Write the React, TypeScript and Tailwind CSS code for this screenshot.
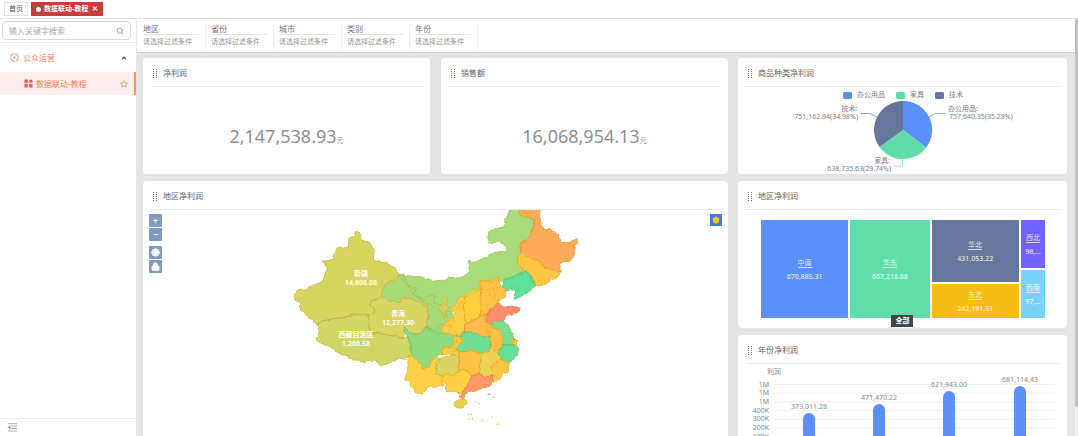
import { ChevronUp, Globe, Lock, Search, Star } from "lucide-react";
import type { ReactNode } from "react";

const filters = ["地区", "省份", "城市", "类别", "年份"];

const provinces = [
  // north
  { name: "内蒙古", color: "#a8db7a", points: "357,225 400,229 425,232 455,240 472,245 510,233 550,230 572,212 565,186 575,182 585,188 615,172 640,158 682,152 674,136 658,125 628,129 622,115 636,88 672,82 676,60 692,28 726,28 750,52 765,60 755,92 745,115 724,132 725,155 712,167 718,195 732,202 730,218 685,236 672,245 655,240 620,245 605,268 555,292 530,325 500,350 465,325 430,302 400,280 375,250" },
  { name: "黑龙江", color: "#ffab58", points: "720,27 775,27 782,60 792,88 815,90 835,105 836,126 860,128 890,113 892,118 875,180 855,182 840,190 840,215 795,206 780,184 750,174 722,156 720,132 745,115 765,60 750,52 722,46" },
  { name: "吉林", color: "#ffc544", points: "712,167 725,158 750,175 778,184 795,207 838,214 838,226 820,236 795,250 766,260 752,230 740,216 730,218 732,202 715,192" },
  { name: "辽宁", color: "#5ee09b", points: "672,238 700,228 740,215 755,228 765,258 725,288 700,299 710,268 690,266 675,276 670,262" },
  // west
  { name: "甘肃", color: "#a9da78", points: "357,224 372,226 380,250 388,266 410,262 403,280 432,299 440,290 464,288 462,308 480,318 500,330 515,338 524,350 526,366 510,378 505,395 480,402 450,390 438,378 446,345 440,318 400,298 372,293 355,308 330,304 304,292 308,268 326,246" },
  { name: "新疆", color: "#d7d45e", points: "42,288 52,274 68,268 80,268 90,260 108,254 130,240 138,215 138,190 130,184 160,178 172,140 205,144 207,116 224,110 228,98 238,99 242,112 258,124 272,128 282,148 280,180 318,186 340,200 357,224 348,236 326,246 308,268 304,292 275,304 268,315 285,328 282,338 262,342 240,342 215,347 205,352 165,355 130,362 113,375 100,360 78,350 72,338 58,325 60,310 48,302" },
  { name: "青海", color: "#dad461", points: "304,292 330,304 355,308 372,293 400,298 420,305 440,318 446,340 440,368 450,388 430,383 420,400 400,402 378,382 370,418 345,410 320,404 275,398 266,385 268,360 262,342 285,336 285,328 268,315 275,304" },
  { name: "西藏", color: "#d0d766", points: "113,375 130,362 165,355 205,352 215,345 262,342 268,360 266,385 275,398 320,404 345,410 370,418 385,410 393,440 395,468 375,478 360,474 345,482 320,492 300,496 285,480 262,482 256,490 250,482 225,480 195,465 165,450 150,440 130,432 112,425 110,410 118,402" },
  { name: "四川", color: "#8fdc80", points: "372,384 380,384 400,402 420,402 430,388 440,378 465,390 485,372 510,376 530,400 530,425 510,442 487,447 487,462 460,472 452,484 448,502 432,508 420,490 405,472 395,468 393,440 385,415 375,402" },
  { name: "宁夏", color: "#d8d260", points: "490,290 502,292 498,314 510,322 498,336 492,358 485,335 474,322 488,314" },
  { name: "云南", color: "#ffd044", points: "380,465 395,475 405,470 420,490 432,508 448,502 452,482 460,470 482,480 470,490 470,510 480,528 495,532 485,545 492,558 465,562 440,560 430,582 410,578 395,562 390,545 373,538 385,515 388,490" },
  // center
  { name: "陕西", color: "#ffd044", points: "510,320 525,318 535,295 555,288 552,330 555,360 553,397 550,410 520,405 488,395 492,370 512,365 525,350 522,335" },
  { name: "山西", color: "#ffd13f", points: "555,288 580,270 602,268 600,300 605,330 598,350 555,368 552,330" },
  { name: "河北", color: "#ffc145", points: "602,268 600,242 620,243 655,230 662,250 672,264 680,288 662,295 653,310 635,320 622,345 598,349 605,325 602,290" },
  { name: "北京", color: "#ffc83e", points: "625,270 638,262 648,275 642,290 628,283" },
  { name: "天津", color: "#ffd044", points: "645,283 653,288 656,302 647,300" },
  { name: "山东", color: "#ff8c6c", points: "620,345 630,327 655,311 675,325 695,315 720,322 718,333 695,345 675,350 665,368 640,365 630,373 616,367" },
  { name: "河南", color: "#ffb94e", points: "556,367 598,349 620,345 618,366 636,372 624,390 632,413 610,411 575,397 553,395" },
  { name: "江苏", color: "#7adf91", points: "635,370 665,365 685,375 695,400 708,420 690,432 665,432 666,410 655,390 640,380" },
  { name: "安徽", color: "#ffc145", points: "620,380 640,378 655,390 666,410 670,432 662,453 640,453 628,440 632,415 622,400" },
  { name: "上海", color: "#ffc431", points: "700,422 712,421 711,436 698,433" },
  { name: "浙江", color: "#63df99", points: "668,432 695,432 718,444 712,465 695,485 680,488 660,478 658,455" },
  { name: "湖北", color: "#6fdf94", points: "548,397 575,396 600,410 630,413 630,436 628,453 605,460 580,452 540,453 528,446 540,430 550,422 538,412" },
  { name: "重庆", color: "#ffc93f", points: "525,408 540,410 550,422 532,435 530,448 541,458 538,476 520,464 510,462 485,465 485,447 510,442 520,428" },
  { name: "贵州", color: "#dad461", points: "480,475 505,470 520,462 538,475 538,515 520,523 490,528 468,522 470,500 465,487" },
  { name: "湖南", color: "#ffc145", points: "540,452 580,450 606,459 602,490 600,522 572,528 565,512 538,512 538,475" },
  { name: "江西", color: "#eed252", points: "606,459 630,450 660,452 658,476 638,497 634,530 610,530 599,517 602,487" },
  { name: "福建", color: "#ffc544", points: "658,477 688,490 685,510 665,530 642,550 634,530 638,498" },
  { name: "广西", color: "#ffd044", points: "488,528 520,523 540,511 565,511 572,532 562,558 545,578 525,578 500,572 500,555 484,540" },
  { name: "广东", color: "#ff9868", points: "573,525 600,519 610,530 638,528 643,542 630,555 600,565 568,575 553,585 553,596 542,594 545,575 562,558 568,540" },
  { name: "海南", color: "#e8cf4f", points: "535,600 556,598 558,608 545,625 528,623 526,612" },
];

const islets = [
  { x: 566, y: 643 }, { x: 574, y: 644 }, { x: 569, y: 650 }, { x: 577, y: 653 }, { x: 567, y: 658 },
  { x: 600, y: 662 }, { x: 606, y: 658 }, { x: 608, y: 666 }, { x: 636, y: 652 }, { x: 652, y: 670 },
  { x: 586, y: 607 }, { x: 597, y: 611 },
];

const mapLabels = [
  { name: "新疆", value: "14,606.06", x: 361, y: 276 },
  { name: "青海", value: "12,277.30", x: 398, y: 316 },
  { name: "西藏自治区", value: "1,266.58", x: 356, y: 337 },
];

const legend = [
  { name: "办公用品", color: "#5b8ff9", x: 843 },
  { name: "家具", color: "#5fdca9", x: 896 },
  { name: "技术", color: "#65779b", x: 935 },
];

const ticks = ["1M", "1M", "1M", "400K", "300K", "200K", "100K"];

const bars = [
  { value: "373,011.28", x: 809, top: 413 },
  { value: "471,470.22", x: 879, top: 404 },
  { value: "621,943.00", x: 949, top: 391 },
  { value: "681,114.43", x: 1020, top: 386 },
];

const DragHandle = () => (
  <svg viewBox="0 0 4 9" className="h-[9px] w-1 shrink-0 fill-[#777]">
    {[0, 2, 4, 6, 8].map((y) => (
      <g key={y}>
        <rect x="0" y={y} width="1" height="1" />
        <rect x="3" y={y} width="1" height="1" />
      </g>
    ))}
  </svg>
);

const Card = ({ title, children, className = "" }: { title: string; children: ReactNode; className?: string }) => (
  <section className={`flex flex-col rounded-sm bg-white ${className}`}>
    <header className="mx-2 flex h-[29px] shrink-0 items-center gap-1.5 border-b border-[#e8e8e8] px-[2px] pt-[2px]">
      <DragHandle />
      <h2 className="text-[8px] leading-3 text-[#666]">{title}</h2>
    </header>
    {children}
  </section>
);

const Metric = ({ value }: { value: string }) => (
  <div className="flex flex-1 items-center justify-center pt-4 text-[#8f8f8f]">
    <p className="text-[18px] leading-6">
      {value}
      <span className="text-[7px]">元</span>
    </p>
  </div>
);

const TreeCell = ({ name, value, className }: { name: string; value: string; className: string }) => (
  <div className={`flex min-w-0 flex-col items-center justify-center gap-1 overflow-hidden text-[7px] leading-[9px] text-white/80 ${className}`}>
    <span className="border-b border-white/70">{name}</span>
    <span className="font-medium">{value}</span>
  </div>
);

const Sidebar = () => (
  <aside className="flex w-[137px] shrink-0 flex-col border-r border-[#e6e6e6] bg-white">
    <div className="border-b border-[#ececec] py-[2px] pr-[5px] pl-[2px]">
      <label className="flex h-[19px] items-center rounded-sm border border-[#d9d9d9] px-1.5">
        <input
          aria-label="搜索"
          placeholder="输入关键字搜索"
          className="w-full min-w-0 text-[8px] leading-3 outline-none placeholder:text-[#aaa]"
        />
        <Search className="size-2 shrink-0 text-[#777]" />
      </label>
    </div>
    <nav className="flex flex-1 flex-col text-[8px] leading-3 text-[#f57c5a]">
      <button className="flex h-[29px] items-center gap-1 pr-[9px] pl-[10px]">
        <svg viewBox="0 0 9 9" className="size-[9px]" fill="none" stroke="currentColor">
          <circle cx="4.5" cy="4.5" r="3.9" strokeWidth="1" strokeDasharray="5 1.1" />
          <circle cx="4.5" cy="4.5" r="1.1" fill="currentColor" stroke="none" />
        </svg>
        <span>公众运营</span>
        <ChevronUp className="ml-auto size-[6px] text-[#555]" strokeWidth={5} />
      </button>
      <a href="#tutorial" className="flex h-[23px] items-center gap-[3px] border-r-2 border-[#ff8f6b] bg-[#fdefed] pr-[6px] pl-6">
        <svg viewBox="0 0 9 9" className="size-[9px]" fill="#f25a4a">
          <rect x="0.4" y="0.5" width="3.5" height="3.5" rx="0.5" />
          <rect x="5" y="0.5" width="3.5" height="3.5" rx="1.7" />
          <rect x="0.4" y="5" width="3.5" height="3.5" rx="0.5" />
          <rect x="5" y="5" width="3.5" height="3.5" rx="0.5" />
        </svg>
        <span>数据联动-教程</span>
        <Star className="ml-auto size-2 text-[#c98748]" />
      </a>
    </nav>
    <div className="flex h-[18px] items-center border-t border-[#ececec] pl-2">
      <button aria-label="收起菜单">
        <svg viewBox="0 0 9 9" className="size-[9px]">
          <path d="M0 0.7H9M3 3.1H9M3 5.5H9M0 8H9" stroke="#a9a29c" strokeWidth="0.9" />
          <path d="M2.3 2.4V6.2L0 4.3Z" fill="#e8603c" />
        </svg>
      </button>
    </div>
  </aside>
);

const RegionMap = () => (
  <div className="relative overflow-hidden">
    <svg viewBox="143 210 585 250" className="block w-full">
      <defs>
        <filter id="coast" x="-5%" y="-5%" width="110%" height="110%">
          <feTurbulence type="fractalNoise" baseFrequency="0.045" numOctaves="2" seed="4" />
          <feDisplacementMap in="SourceGraphic" scale="16" xChannelSelector="R" yChannelSelector="G" />
        </filter>
      </defs>
      <g transform="translate(280 200) scale(0.3333)" filter="url(#coast)">
        {provinces.map((p) => (
          <polygon key={p.name} points={p.points} fill={p.color} stroke={p.color} strokeWidth="3" strokeLinejoin="round" />
        ))}
        {provinces.map((p) => (
          <polygon key={p.name} points={p.points} fill="none" stroke="#a07800" strokeOpacity="0.25" strokeWidth="2.5" strokeLinejoin="round" />
        ))}
        {islets.map((i) => (
          <circle key={`${i.x}-${i.y}`} cx={i.x} cy={i.y} r="2.5" fill="#d2c45c" />
        ))}
        <circle cx="628" cy="586" r="2.5" fill="#ff7d60" />
        <circle cx="641" cy="590" r="2.5" fill="#ff7d60" />
      </g>
      {mapLabels.map((l) => (
        <text key={l.name} x={l.x} y={l.y} textAnchor="middle" className="fill-white text-[7px] font-semibold">
          {l.name}
          <tspan x={l.x} dy="9">{l.value}</tspan>
        </text>
      ))}
    </svg>
    <div className="absolute top-1 left-1.5 flex flex-col gap-px text-white">
      <button aria-label="放大" className="flex size-[13px] items-center justify-center rounded-[1px] bg-[#7b9bc4] text-[9px] leading-none font-bold">+</button>
      <button aria-label="缩小" className="flex size-[13px] items-center justify-center rounded-[1px] bg-[#7b9bc4] text-[9px] leading-none font-bold">−</button>
      <button aria-label="全图" className="mt-1 flex size-[13px] items-center justify-center rounded-[1px] bg-[#7b9bc4]">
        <Globe className="size-[9px] fill-white/70" />
      </button>
      <button aria-label="锁定" className="flex size-[13px] items-center justify-center rounded-[1px] bg-[#7b9bc4]">
        <Lock className="size-[9px] fill-white" strokeWidth={3} />
      </button>
    </div>
    <button aria-label="图层" className="absolute top-1 right-1.5 flex size-[12px] items-center justify-center bg-[#3c7edb]">
      <svg viewBox="0 0 8 8" className="size-2">
        <path d="M4 0.3L7.5 2.6L6.6 6.8L4 7.7L1.2 6.6L0.5 2.6Z" fill="#f5c02c" />
      </svg>
    </button>
  </div>
);

const CategoryPie = () => (
  <svg viewBox="738 87 329 87" className="block w-full fill-[#808080] text-[7px]">
    {legend.map((l) => (
      <g key={l.name}>
        <rect x={l.x} y="92" width="9" height="7" rx="1.5" fill={l.color} />
        <text x={l.x + 14} y="97">{l.name}</text>
      </g>
    ))}
    <path d="M903 130V101A29 29 0 0 1 926.2 147.5Z" fill="#5b8ff9" />
    <path d="M903 130L926.2 147.5A29 29 0 0 1 879.5 147Z" fill="#5fdca9" />
    <path d="M903 130L879.5 147A29 29 0 0 1 903 101Z" fill="#65779b" />
    <path d="M929 117L935 113.5H945" fill="none" stroke="#5b8ff9" strokeWidth="0.7" />
    <path d="M877 117L870 113.5H861" fill="none" stroke="#65779b" strokeWidth="0.7" />
    <path d="M902.5 159V166H894" fill="none" stroke="#5fdca9" strokeWidth="0.7" />
    <text x="948" y="111">办公用品:</text>
    <text x="949" y="119">757,640.35(35.28%)</text>
    <text x="857" y="111" textAnchor="end">技术:</text>
    <text x="858" y="119" textAnchor="end">751,162.94(34.98%)</text>
    <text x="890" y="163" textAnchor="end">家具:</text>
    <text x="891" y="171" textAnchor="end">638,735.63(29.74%)</text>
  </svg>
);

const RegionTreemap = () => (
  <div className="relative pt-[10px] pr-[22px] pb-[10px] pl-[23px]">
    <div className="grid h-[98px] grid-cols-[87fr_79fr_87fr_24fr] gap-[2px]">
      <TreeCell name="中南" value="670,885.31" className="bg-[#5b8ff9]" />
      <TreeCell name="华东" value="607,218.68" className="bg-[#61ddaa]" />
      <div className="grid grid-rows-[62fr_34fr] gap-[2px]">
        <TreeCell name="华北" value="431,053.22" className="bg-[#65779b]" />
        <TreeCell name="东北" value="242,191.51" className="bg-[#f6bd16]" />
      </div>
      <div className="grid grid-rows-2 gap-[2px]">
        <TreeCell name="西北" value="98,..." className="bg-[#7262fd]" />
        <TreeCell name="西南" value="97,..." className="bg-[#78d3f8]" />
      </div>
    </div>
    <button className="absolute bottom-px left-1/2 h-3 w-[22px] -translate-x-1/2 bg-[#444] text-[7px] leading-3 font-bold text-white">
      全部
    </button>
  </div>
);

const YearBars = () => (
  <svg viewBox="738 364 329 90" className="block w-full fill-[#8a8a8a] text-[7px]">
    <text x="767" y="374">利润</text>
    {ticks.map((t, i) => (
      <g key={i}>
        <line x1="773" x2="1055" y1={384.5 + i * 8.7} y2={384.5 + i * 8.7} stroke="#f0f0f0" strokeWidth="1" />
        <text x="769" y={386.5 + i * 8.7} textAnchor="end">{t}</text>
      </g>
    ))}
    {bars.map((b) => (
      <g key={b.value}>
        <path d={`M${b.x - 6} 454V${b.top + 6}a6 6 0 0 1 12 0V454Z`} fill="#5b8ff9" />
        <text x={b.x} y={b.top - 4} textAnchor="middle">{b.value}</text>
      </g>
    ))}
  </svg>
);

const App = () => {
  return (
    <div className="flex h-screen flex-col overflow-hidden bg-[#e4e4e4] font-['Noto_Sans','Noto_Sans_CJK_SC',sans-serif]">
      {/* Open pages */}
      <div className="flex h-[19px] shrink-0 items-start gap-[3px] border-b border-[#e2e2e2] bg-white px-1 pt-[2px] text-[7px]">
        <button className="h-[14px] border border-[#e6e6e6] px-1 leading-3 text-[#555]">首页</button>
        <button className="flex h-[14px] items-center gap-[3px] bg-[#c83c3c] px-[5px] font-bold text-white">
          <span className="size-[5px] rounded-full bg-white" />
          数据联动-教程
          <span className="pl-px">✕</span>
        </button>
      </div>

      <div className="flex min-h-0 flex-1">
        <Sidebar />

        <main className="flex min-w-0 flex-1 flex-col overflow-hidden">
          {/* Filters */}
          <div className="z-10 flex h-[33px] shrink-0 bg-white pt-1 pl-[6px] shadow-[0_1px_1px_#d4d4d4]">
            {filters.map((f) => (
              <label key={f} className="mr-[5px] h-[26px] w-[63px] border-r border-[#eee] pr-[6px] text-[8px] leading-[11px] text-[#777]">
                <span className="block border-b border-[#e6e6e6]">{f}</span>
                <input
                  placeholder="请选择过滤条件"
                  className="block w-full pt-px text-[7px] leading-3 outline-none placeholder:text-[#999]"
                />
              </label>
            ))}
          </div>

          {/* Dashboard */}
          <div className="grid grid-cols-[16fr_9fr] items-start gap-[10px] pt-[6px] pr-2 pl-[6px]">
            <div className="flex min-w-0 flex-col gap-[7px]">
              <div className="grid grid-cols-2 gap-[11px]">
                <Card title="净利润" className="h-[116px]">
                  <Metric value="2,147,538.93" />
                </Card>
                <Card title="销售额" className="h-[116px]">
                  <Metric value="16,068,954.13" />
                </Card>
              </div>
              <Card title="地区净利润">
                <RegionMap />
              </Card>
            </div>
            <div className="flex min-w-0 flex-col gap-[7px]">
              <Card title="商品种类净利润">
                <CategoryPie />
              </Card>
              <Card title="地区净利润">
                <RegionTreemap />
              </Card>
              <Card title="年份净利润">
                <YearBars />
              </Card>
            </div>
          </div>
        </main>

        <div className="w-[3px] shrink-0 bg-[#efefef]">
          <div className="h-[93%] rounded-sm bg-[#c1c1c1]" />
        </div>
      </div>
    </div>
  );
};

export default App;
